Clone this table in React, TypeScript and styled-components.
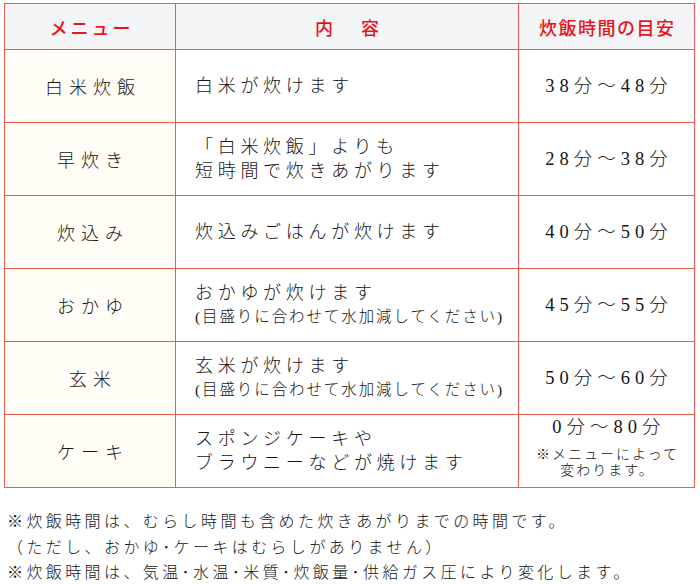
import React from 'react';
import styled, { createGlobalStyle } from 'styled-components';

const GlobalStyle = createGlobalStyle`
  html, body {
    margin: 0;
    padding: 0;
    background: #ffffff;
  }
  body {
    font-family: "Liberation Serif", "Noto Sans CJK JP", serif;
    color: #151515;
  }
`;

const Page = styled.div`
  width: 700px;
  height: 584px;
  padding: 3px 0 0 4px;
  box-sizing: border-box;
  overflow: hidden;
`;

const Table = styled.div`
  display: grid;
  grid-template-columns: 170px 342px 175px;
  grid-template-rows: 45px repeat(6, 72px);
  gap: 1px;
  padding: 1px;
  width: 691px;
  box-sizing: border-box;
  background: #ec5b4e;
`;

const HeaderCell = styled.div<{ $spacing?: number }>`
  display: flex;
  align-items: center;
  justify-content: center;
  background: #f4f5f6;
  color: #e8141c;
  font-size: 18px;
  font-weight: 500;
  letter-spacing: ${(p) => p.$spacing ?? 2}px;
  padding-left: ${(p) => p.$spacing ?? 2}px;
  padding-top: 1px;
`;

const MenuCell = styled.div`
  display: flex;
  align-items: center;
  justify-content: center;
  background: #fffdf6;
  font-size: 18px;
  font-weight: 300;
  letter-spacing: 6px;
  padding-left: 6px;
`;

const ContentCell = styled.div`
  display: flex;
  flex-direction: column;
  justify-content: center;
  background: #ffffff;
  padding-left: 19px;
`;

const MainLine = styled.div`
  font-size: 18px;
  font-weight: 300;
  line-height: 24px;
  letter-spacing: 4.7px;
  white-space: nowrap;
`;

const SubLine = styled.div`
  font-size: 15.5px;
  font-weight: 300;
  line-height: 24px;
  letter-spacing: 1.9px;
  white-space: nowrap;
`;

const TimeCell = styled.div<{ $top?: boolean }>`
  display: flex;
  flex-direction: column;
  align-items: center;
  justify-content: ${(p) => (p.$top ? 'flex-start' : 'center')};
  background: #ffffff;
`;

const Time = styled.div`
  font-size: 18.5px;
  font-weight: 300;
  line-height: 24px;
  letter-spacing: 5px;
  padding-left: 5px;
`;

const TimeNote = styled.div`
  font-size: 14px;
  font-weight: 300;
  line-height: 16px;
  letter-spacing: 2px;
  padding-left: 2px;
  text-align: center;
  margin-top: 8px;
`;

const Footnotes = styled.div`
  margin-top: 21px;
  padding-left: 3px;
`;

const Footnote = styled.div`
  font-size: 16px;
  font-weight: 300;
  line-height: 25.5px;
  letter-spacing: 3.4px;
  white-space: nowrap;
`;

type Row = {
  menu: string;
  lines: string[];
  sub?: string;
  time: string;
  note?: string[];
};

const rows: Row[] = [
  { menu: '白米炊飯', lines: ['白米が炊けます'], time: '38分～48分' },
  { menu: '早炊き', lines: ['「白米炊飯」よりも', '短時間で炊きあがります'], time: '28分～38分' },
  { menu: '炊込み', lines: ['炊込みごはんが炊けます'], time: '40分～50分' },
  {
    menu: 'おかゆ',
    lines: ['おかゆが炊けます'],
    sub: '(目盛りに合わせて水加減してください)',
    time: '45分～55分',
  },
  {
    menu: '玄米',
    lines: ['玄米が炊けます'],
    sub: '(目盛りに合わせて水加減してください)',
    time: '50分～60分',
  },
  {
    menu: 'ケーキ',
    lines: ['スポンジケーキや', 'ブラウニーなどが焼けます'],
    time: '0分～80分',
    note: ['※メニューによって', '変わります。'],
  },
];

const App = () => {
  return (
    <Page>
      <GlobalStyle />
      <Table>
        <HeaderCell $spacing={3}>メニュー</HeaderCell>
        <HeaderCell $spacing={5}>内　容</HeaderCell>
        <HeaderCell $spacing={1.5}>炊飯時間の目安</HeaderCell>
        {rows.map((row) => (
          <React.Fragment key={row.menu}>
            <MenuCell>{row.menu}</MenuCell>
            <ContentCell>
              {row.lines.map((l) => (
                <MainLine key={l}>{l}</MainLine>
              ))}
              {row.sub && <SubLine>{row.sub}</SubLine>}
            </ContentCell>
            <TimeCell $top={!!row.note}>
              <Time>{row.time}</Time>
              {row.note && (
                <TimeNote>
                  {row.note.map((n) => (
                    <div key={n}>{n}</div>
                  ))}
                </TimeNote>
              )}
            </TimeCell>
          </React.Fragment>
        ))}
      </Table>
      <Footnotes>
        <Footnote>※炊飯時間は、むらし時間も含めた炊きあがりまでの時間です。</Footnote>
        <Footnote>（ただし、おかゆ･ケーキはむらしがありません）</Footnote>
        <Footnote>※炊飯時間は、気温･水温･米質･炊飯量･供給ガス圧により変化します。</Footnote>
      </Footnotes>
    </Page>
  );
};

export default App;
